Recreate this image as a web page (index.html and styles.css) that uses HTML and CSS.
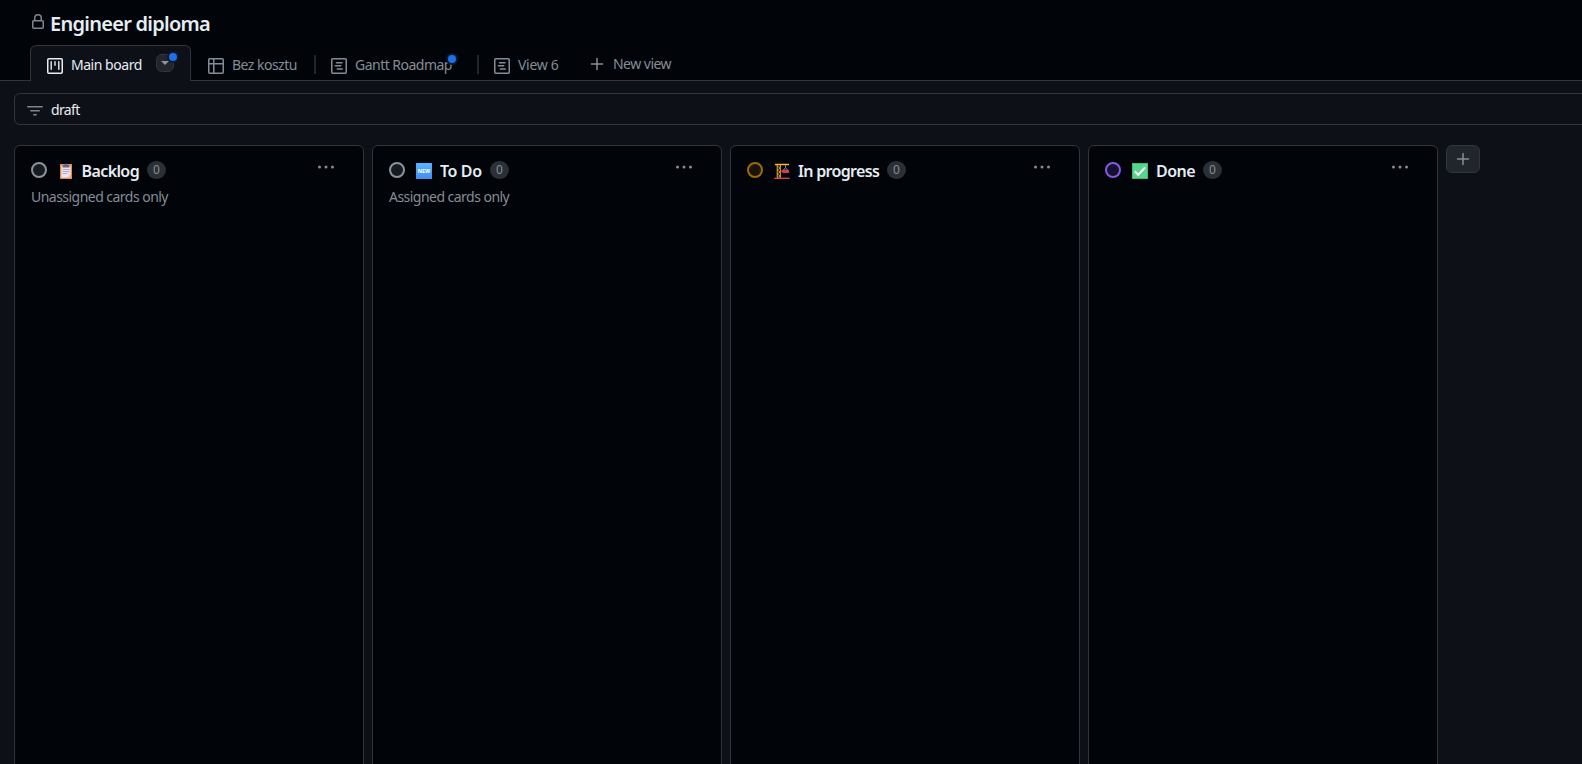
FILE: index.html
```html
<!DOCTYPE html>
<html lang="en">
<head>
<meta charset="utf-8">
<title>Engineer diploma</title>
<link rel="stylesheet" href="styles.css">
</head>
<body>
<svg class="defs" width="0" height="0">
  <symbol id="roadmap" viewBox="0 0 16 16"><rect x=".75" y=".75" width="14.5" height="14.5" rx="1" fill="none" stroke="currentColor" stroke-width="1.5"/><path d="M5.500 4.700h5.500M4.300 7.700h5.500M6.300 10.900h5" stroke="currentColor" stroke-width="1.500" stroke-linecap="round"/></symbol>
  <symbol id="plus" viewBox="0 0 16 16"><path d="M8 2.6v11M2.5 8.1h11" stroke="currentColor" stroke-width="1.5" stroke-linecap="round"/></symbol>
  <symbol id="dots" viewBox="0 0 16 16"><g fill="currentColor"><circle cx="1.5" cy="8" r="1.5"/><circle cx="8" cy="8" r="1.5"/><circle cx="14.5" cy="8" r="1.5"/></g></symbol>
  <symbol id="ring" viewBox="0 0 16 16"><circle cx="8" cy="8" r="7" fill="currentColor" fill-opacity=".16" stroke="currentColor" stroke-width="2"/></symbol>
</svg>
<header class="header">
  <div class="title-row">
    <svg class="lock" viewBox="0 0 16 16" fill="currentColor"><path d="M4 4a4 4 0 0 1 8 0v2h.25c.966 0 1.75.784 1.75 1.75v5.5A1.75 1.75 0 0 1 12.25 15h-8.5A1.75 1.75 0 0 1 2 13.25v-5.5C2 6.784 2.784 6 3.75 6H4Zm8.25 3.5h-8.5a.25.25 0 0 0-.25.25v5.5c0 .138.112.25.25.25h8.5a.25.25 0 0 0 .25-.25v-5.5a.25.25 0 0 0-.25-.25ZM10.5 6V4a2.5 2.5 0 1 0-5 0v2Z"/></svg>
    <h1>Engineer diploma</h1>
  </div>
  <nav class="tabs">
    <div class="tab active">
      <svg class="icon" viewBox="0 0 16 16"><rect x=".75" y=".75" width="14.5" height="14.5" rx="1" fill="none" stroke="currentColor" stroke-width="1.5"/><path d="M4.2 3.7v7.6M8 3.7v3.6M11.8 3.7v7.6" stroke="currentColor" stroke-width="1.4" stroke-linecap="round"/></svg>
      <span class="label main">Main board</span>
      <button class="drop"><svg width="8" height="4" viewBox="0 0 8 4"><path d="M0 0h8L4 4z" fill="currentColor"/></svg><i class="dot"></i></button>
    </div>
    <div class="tab bez">
      <svg class="icon" viewBox="0 0 16 16"><path d="M1.75.75h12.5a1 1 0 0 1 1 1v12.5a1 1 0 0 1-1 1H1.75a1 1 0 0 1-1-1V1.75a1 1 0 0 1 1-1ZM5.75.75v14.5M.75 5.75h14.5" fill="none" stroke="currentColor" stroke-width="1.5"/></svg>
      <span class="label">Bez kosztu</span>
    </div>
    <i class="divider"></i>
    <div class="tab gantt">
      <svg class="icon"><use href="#roadmap"/></svg>
      <span class="label">Gantt Roadmap<i class="dot"></i></span>
    </div>
    <i class="divider"></i>
    <div class="tab view">
      <svg class="icon"><use href="#roadmap"/></svg>
      <span class="label">View 6</span>
    </div>
    <div class="tab new">
      <svg class="icon"><use href="#plus"/></svg>
      <span class="label">New view</span>
    </div>
  </nav>
</header>
<main>
  <div class="filter">
    <svg class="icon" viewBox="0 0 16 16"><path d="M.75 3.75h14.5M3.75 7.75h8.5M6.75 11.75h2.5" stroke="currentColor" stroke-width="1.5" stroke-linecap="round"/></svg>
    <span class="label">draft</span>
  </div>
  <div class="board">
    <section class="column">
      <div class="head">
        <svg class="ring gray"><use href="#ring"/></svg>
        <svg class="emoji" viewBox="0 0 16 16"><path d="M2 1h12v15H2z" fill="#e8874b"/><path d="M3.3 2.5h9.4v9L9.5 14.8H3.3z" fill="#e9e3f0"/><path d="M12.7 11.5v3.3H9.5z" fill="#f6c6b0"/><path d="M4.5 4.5V2h2a1.5 1.5 0 0 1 3 0h2v2.5z" fill="#6c6780"/><path d="M4.5 6.5h7M4.500 8.5h7M4.5 10.5h5" stroke="#b5abc6"/></svg>
        <h2 class="t1">Backlog</h2><span class="count">0</span>
        <svg class="more"><use href="#dots"/></svg>
      </div>
      <p>Unassigned cards only</p>
    </section>
    <section class="column">
      <div class="head">
        <svg class="ring gray"><use href="#ring"/></svg>
        <svg class="emoji" viewBox="0 0 16 16"><defs><linearGradient id="sky" x2="0" y2="1"><stop stop-color="#58b4ff"/><stop offset="1" stop-color="#438df0"/></linearGradient></defs><rect width="16" height="16" rx=".6" fill="url(#sky)"/><text class="new-text" x="8" y="10.4" text-anchor="middle" textLength="12.5" lengthAdjust="spacingAndGlyphs">NEW</text></svg>
        <h2 class="t2">To Do</h2><span class="count">0</span>
        <svg class="more"><use href="#dots"/></svg>
      </div>
      <p>Assigned cards only</p>
    </section>
    <section class="column">
      <div class="head">
        <svg class="ring amber"><use href="#ring"/></svg>
        <svg class="emoji" viewBox="0 0 16 16"><path d="M1 1.500h14" stroke="#f5b63c" stroke-width="1.5"/><path d="M3.2 1v14M6.3 1v14" stroke="#f0ad38"/><path d="M3.2 3l3 2-3 2 3 2-3 2 3 2-3 2" fill="none" stroke="#d99a35" stroke-width=".9"/><path d="M11.5 2v3" stroke="#8c8498"/><path d="M11.5 4.5l2.200 2.5H9.3z" fill="none" stroke="#77718a"/><path d="M7.500 7h7.5v3H9L7.500 9z" fill="#d33c53"/><path d="M.3 15.3h15.4" stroke="#f23c5b" stroke-width="1.3"/></svg>
        <h2 class="t3">In progress</h2><span class="count">0</span>
        <svg class="more"><use href="#dots"/></svg>
      </div>
    </section>
    <section class="column">
      <div class="head">
        <svg class="ring purple"><use href="#ring"/></svg>
        <svg class="emoji" viewBox="0 0 16 16"><rect x=".5" y=".5" width="15" height="15" fill="#56d68d" stroke="#43b774"/><path d="M2.8 8.3l3.4 3.4 7-7.3" fill="none" stroke="#fff" stroke-width="2"/></svg>
        <h2 class="t4">Done</h2><span class="count">0</span>
        <svg class="more"><use href="#dots"/></svg>
      </div>
    </section>
    <button class="add"><svg class="icon"><use href="#plus"/></svg></button>
  </div>
</main>
</body>
</html>
```
FILE: styles.css
```css
* { box-sizing: border-box; }
body { margin: 0; height: 764px; overflow: hidden; display: flex; flex-direction: column; background: #0d1117; color: #e6edf3; font: 14px/20px "Noto Sans", sans-serif; }
svg { display: block; flex: none; }
i { display: block; }
.defs { position: absolute; }
.icon { width: 16px; height: 16px; }
button { padding: 0; }
.header { height: 81px; flex: none; background: #010409; border-bottom: 1px solid #30363d; }
.title-row { display: flex; align-items: flex-start; height: 45px; padding-left: 30px; }
.lock { width: 16px; height: 16px; margin-top: 14px; color: #7d8590; }
h1 { margin: 9px 0 0 4px; font-size: 20px; line-height: 30px; font-weight: 600; letter-spacing: -.73px; white-space: nowrap; }
.tabs { display: flex; align-items: flex-start; height: 36px; padding-left: 30px; color: #848d97; }
.tab { display: flex; align-items: flex-start; height: 36px; padding-top: 13px; }
.label { position: relative; margin-left: 8px; margin-top: -3px; white-space: nowrap; letter-spacing: -.52px; }
.active { width: 161px; padding: 12px 0 0 16px; background: #0d1117; border: 1px solid #30363d; border-bottom: 0; border-radius: 6px 6px 0 0; color: #e6edf3; }
.main { width: 85px; letter-spacing: -.47px; }
.drop { position: relative; display: flex; align-items: center; justify-content: center; width: 18px; height: 18px; margin-top: -4px; border: 1px solid #30363d; border-radius: 6px; background: #21262d; color: #8b949e; }
.dot { position: absolute; width: 12px; height: 12px; border: 2px solid #0d1a2e; border-radius: 50%; background: #1f6feb; }
.drop .dot { right: -6px; top: -4px; }
.label .dot { right: -6px; top: -2px; }
.bez { width: 123px; padding-left: 17px; }
.divider { width: 2px; height: 19px; margin-top: 10px; background: #21262d; }
.gantt { width: 161px; padding-left: 15px; }
.view { width: 110px; padding-left: 15px; }
.view .label { letter-spacing: -.3px; }
.new { padding-top: 11px; }
.new .label { margin-top: -2px; }
main { flex: 1; padding: 12px 0 0 14px; overflow: hidden; }
.filter { display: flex; align-items: flex-start; width: 1580px; height: 32px; padding: 9px 0 0 12px; border: 1px solid #30363d; border-radius: 6px; }
.filter .icon { color: #7d8590; }
.filter .label { letter-spacing: -.65px; }
.board { display: flex; gap: 8px; align-items: flex-start; margin-top: 20px; }
.column { width: 350px; height: 640px; flex: none; border: 1px solid #30363d; border-radius: 6px; background: #010409; padding: 14px 29px 0 16px; }
.head { display: flex; height: 22px; align-items: flex-start; }
.ring { width: 16px; height: 16px; margin-top: 2px; }
.gray { color: #8b949e; }
.amber { color: #9e6a03; }
.purple { color: #8957e5; }
.emoji { width: 16px; height: 16px; margin: 3px 8px 0 11px; }
.new-text { font: 700 6px "Noto Sans", sans-serif; fill: #fff; }
h2 { margin: 0 8px 0 0; font-size: 16px; line-height: 22px; font-weight: 600; white-space: nowrap; letter-spacing: -.4px; }
.t1 { width: 57px; letter-spacing: -.6px; text-indent: -.5px; }
.t2 { width: 42px; }
.t3 { width: 81px; letter-spacing: -.68px; }
.t4 { width: 39px; letter-spacing: -.5px; }
.count { width: 19px; height: 18px; margin-top: 1px; border-radius: 9px; background: #2b3036; color: #848d97; font-size: 12px; line-height: 18px; text-align: center; }
.more { width: 16px; height: 16px; margin: -1px 0 0 auto; color: #848d97; }
p { margin: 5px 0 0; color: #848d97; white-space: nowrap; letter-spacing: -.53px; }
.add { display: flex; align-items: center; justify-content: center; width: 34px; height: 28px; border: 1px solid #30363d; border-radius: 6px; background: #21262d; color: #848d97; }
```
